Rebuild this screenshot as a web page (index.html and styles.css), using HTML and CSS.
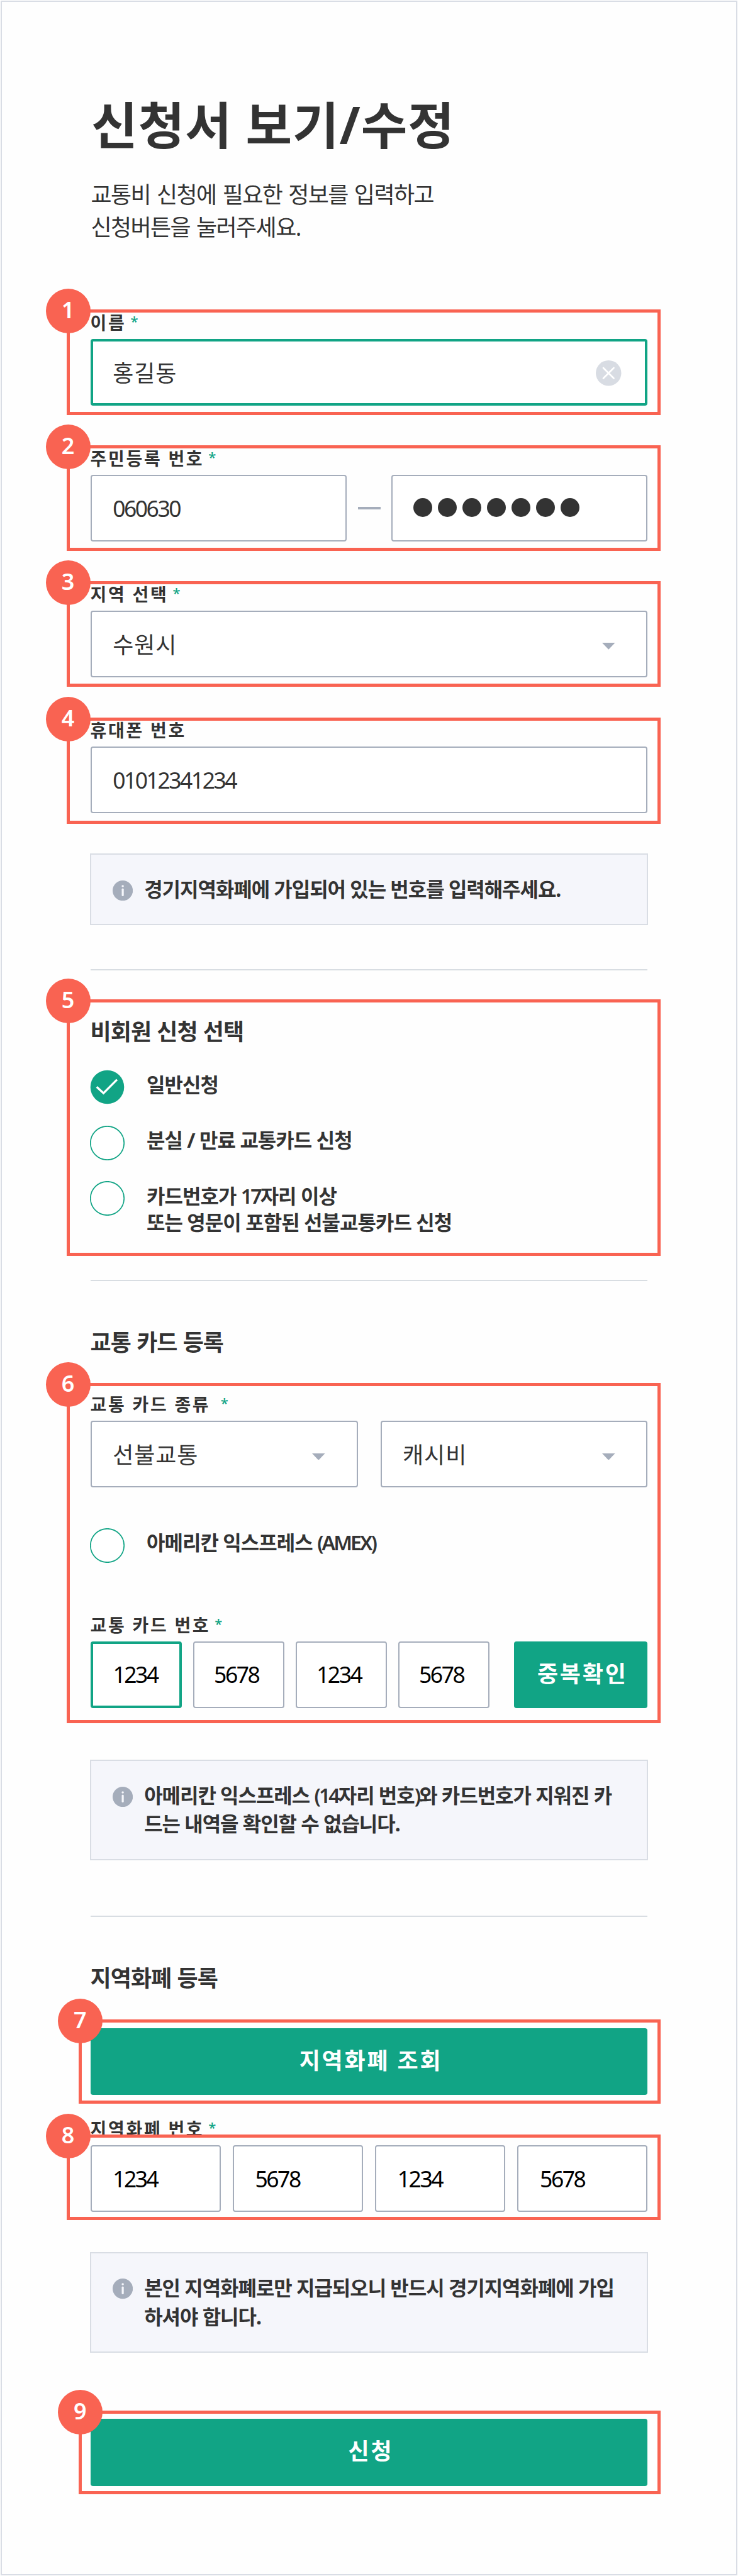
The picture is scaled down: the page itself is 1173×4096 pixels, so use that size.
FILE: index.html
```html
<!DOCTYPE html>
<html lang="ko">
<head>
<meta charset="utf-8">
<title>신청서 보기/수정</title>
<link rel="stylesheet" href="styles.css">
</head>
<body>
<main class="page">
  <h1 class="title">신청서 보기/수정</h1>
  <p class="lead">교통비 신청에 필요한 정보를 입력하고<br>신청버튼을 눌러주세요.</p>

  <div class="fields">
    <section class="group">
      <div class="label">이름<span class="req">*</span></div>
      <div class="input input--active">
        <span class="value">홍길동</span>
        <svg class="clear" viewBox="0 0 40 40"><circle cx="20" cy="20" r="20"/><path d="M11.8 11.8 28.2 28.2M28.2 11.8 11.8 28.2"/></svg>
      </div>
      <div class="mark"><span class="badge">1</span></div>
    </section>

    <section class="group">
      <div class="label">주민등록 번호<span class="req">*</span></div>
      <div class="row row--id">
        <div class="input"><span class="value value--num">060630</span></div>
        <span class="dash"></span>
        <div class="input"><span class="dots"><i></i><i></i><i></i><i></i><i></i><i></i><i></i></span></div>
      </div>
      <div class="mark"><span class="badge">2</span></div>
    </section>

    <section class="group">
      <div class="label">지역 선택<span class="req">*</span></div>
      <div class="input"><span class="value">수원시</span><svg class="arrow" viewBox="0 0 21 11"><path d="M0 0H21L10.5 11Z"/></svg></div>
      <div class="mark"><span class="badge">3</span></div>
    </section>

    <section class="group">
      <div class="label">휴대폰 번호</div>
      <div class="input"><span class="value value--num">01012341234</span></div>
      <div class="mark mark--phone"><span class="badge">4</span></div>
    </section>
  </div>

  <div class="info info--phone">
    <svg class="info-icon" viewBox="0 0 32 32"><circle cx="16" cy="16" r="16"/><circle class="ink" cx="16" cy="8.9" r="1.75"/><rect class="ink" x="14.4" y="12.5" width="3.2" height="12.4" rx="1.6"/></svg>
    <p>경기지역화폐에 가입되어 있는 번호를 입력해주세요.</p>
  </div>

  <hr class="rule rule--first">

  <section class="group group--types">
    <h2 class="heading">비회원 신청 선택</h2>
    <div class="radios">
      <div class="radio"><svg class="circle" viewBox="0 0 55 55"><circle class="on" cx="27.5" cy="27.5" r="26.8"/><path d="M10.7 27.2 21.5 37.2 43 15.6"/></svg><span>일반신청</span></div>
      <div class="radio"><svg class="circle" viewBox="0 0 55 55"><circle cx="27.5" cy="27.5" r="26.7"/></svg><span>분실 / 만료 교통카드 신청</span></div>
      <div class="radio"><svg class="circle" viewBox="0 0 55 55"><circle cx="27.5" cy="27.5" r="26.7"/></svg><span>카드번호가 <b class="tight">17</b>자리 이상<br>또는 영문이 포함된 선불교통카드 신청</span></div>
    </div>
    <div class="mark mark--types"><span class="badge">5</span></div>
  </section>

  <hr class="rule">

  <h2 class="heading heading--section">교통 카드 등록</h2>

  <section class="group group--card">
    <div class="label">교통 카드 종류<span class="req req--far">*</span></div>
    <div class="row row--kinds">
      <div class="input"><span class="value">선불교통</span><svg class="arrow" viewBox="0 0 21 11"><path d="M0 0H21L10.5 11Z"/></svg></div>
      <div class="input"><span class="value">캐시비</span><svg class="arrow" viewBox="0 0 21 11"><path d="M0 0H21L10.5 11Z"/></svg></div>
    </div>
    <div class="radio radio--amex"><svg class="circle" viewBox="0 0 55 55"><circle cx="27.5" cy="27.5" r="26.7"/></svg><span>아메리칸 익스프레스 <b class="tight">(AMEX)</b></span></div>
    <div class="label">교통 카드 번호<span class="req">*</span></div>
    <div class="row row--check">
      <div class="input input--digits input--active"><span class="value value--num">1234</span></div>
      <div class="input input--digits"><span class="value value--num">5678</span></div>
      <div class="input input--digits"><span class="value value--num">1234</span></div>
      <div class="input input--digits"><span class="value value--num">5678</span></div>
      <button class="button">중복확인</button>
    </div>
    <div class="mark mark--card"><span class="badge">6</span></div>
  </section>

  <div class="info info--card">
    <svg class="info-icon" viewBox="0 0 32 32"><circle cx="16" cy="16" r="16"/><circle class="ink" cx="16" cy="8.9" r="1.75"/><rect class="ink" x="14.4" y="12.5" width="3.2" height="12.4" rx="1.6"/></svg>
    <p>아메리칸 익스프레스 <b class="tight">(14</b>자리 번호<b class="tight">)</b>와 카드번호가 지워진 카<br>드는 내역을 확인할 수 없습니다.</p>
  </div>

  <hr class="rule rule--last">

  <h2 class="heading heading--section">지역화폐 등록</h2>

  <section class="group group--lookup">
    <button class="button">지역화폐 조회</button>
    <div class="mark mark--button"><span class="badge">7</span></div>
  </section>

  <section class="group group--local">
    <div class="label">지역화폐 번호<span class="req">*</span></div>
    <div class="row row--local">
      <div class="input input--plain"><span class="value value--num">1234</span></div>
      <div class="input input--plain"><span class="value value--num">5678</span></div>
      <div class="input input--plain"><span class="value value--num">1234</span></div>
      <div class="input input--plain"><span class="value value--num">5678</span></div>
    </div>
    <div class="mark mark--local"><span class="badge">8</span></div>
  </section>

  <div class="info info--local">
    <svg class="info-icon" viewBox="0 0 32 32"><circle cx="16" cy="16" r="16"/><circle class="ink" cx="16" cy="8.9" r="1.75"/><rect class="ink" x="14.4" y="12.5" width="3.2" height="12.4" rx="1.6"/></svg>
    <p>본인 지역화폐로만 지급되오니 반드시 경기지역화폐에 가입<br>하셔야 합니다.</p>
  </div>

  <section class="group group--submit">
    <button class="button">신청</button>
    <div class="mark mark--button"><span class="badge">9</span></div>
  </section>
</main>
</body>
</html>
```
FILE: styles.css
```css
* { box-sizing: border-box; }

body {
  margin: 0;
  padding: 1px;
  background: #fff;
  color: #333;
  font-family: "Noto Sans", "Noto Sans CJK KR", sans-serif;
  white-space: nowrap;
}

.page {
  height: 4094px;
  padding: 145px 140.6px 0;
  border: 2px solid #d9dde5;
  background: #fefefe;
}

h1, h2, p { margin: 0; }

.title {
  padding-left: 1.5px;
  font-size: 80px;
  line-height: 100px;
  font-weight: 700;
  letter-spacing: 0.95px;
}

.lead {
  height: 105.8px;
  margin-top: 35.5px;
  padding-left: 0.8px;
  font-size: 36px;
  line-height: 52.9px;
  letter-spacing: -1.6px;
  word-spacing: 2.3px;
}

.fields {
  display: flex;
  flex-direction: column;
  gap: 66.15px;
  margin-top: 105.9px;
}

.group { position: relative; }

.label {
  display: flex;
  height: 36px;
  margin-bottom: 7.6px;
  font-size: 28px;
  line-height: 36px;
  font-weight: 700;
  letter-spacing: 2.7px;
  white-space: pre;
}

.req {
  margin-left: 7px;
  color: #11a485;
  font-size: 22px;
  line-height: 30px;
  font-weight: 500;
}
.req--far { margin-left: 16.3px; }

.input {
  display: flex;
  align-items: center;
  height: 106.2px;
  padding: 0 39.9px 0 33.6px;
  border: 2px solid #a5adbb;
  border-radius: 4px;
  background: #fff;
}
.input--active {
  padding: 0 37.9px 0 31.6px;
  border: 4px solid #11a485;
}

.value { font-size: 36px; letter-spacing: 0.9px; }
.value--num { font-size: 35.5px; letter-spacing: -2.5px; }

.input--digits {
  padding: 0 0 2px 31.5px;
  color: #000;
}
.input--digits.input--active { padding-left: 31.8px; }
.input--plain { color: #000; }

.clear {
  width: 40.5px;
  height: 40.5px;
  margin: 3px 0 0 auto;
  fill: #d8dce3;
}
.clear path { stroke: #fff; stroke-width: 2.6; stroke-linecap: round; }

.arrow {
  width: 20.6px;
  height: 10.8px;
  margin: 8px 9.7px 0 auto;
  fill: #a5adbb;
}

.row { display: grid; }
.row--id { grid-template-columns: 407.5px 1fr 407.3px; }
.row--kinds { grid-template-columns: 1fr 1fr; gap: 36px; }
.row--check { grid-template-columns: repeat(4, 145.1px) 1fr; column-gap: 17.9px; }
.row--check .button { margin-left: 21px; width: 212.5px; }
.row--local { grid-template-columns: repeat(4, 1fr); gap: 19.4px; }

.dash {
  place-self: center;
  width: 36px;
  height: 3.6px;
  background: #a5adbb;
}

.dots { display: flex; gap: 8.5px; margin: -2px 0 0 -1.2px; }
.dots i {
  width: 30.5px;
  height: 30.5px;
  border-radius: 50%;
  background: #333;
}

.mark {
  position: absolute;
  inset: -3.4px -20.2px -15.2px -38.1px;
  border: 5px solid #f96352;
}
.mark--phone { top: -1.9px; bottom: -16.9px; }
.mark--types { top: -25.8px; bottom: -32px; }
.mark--card { top: -16.2px; bottom: -24px; }
.mark--button { top: -13.6px; bottom: -13.5px; left: -18.7px; }
.mark--local { top: 26.7px; bottom: -13.3px; }

.badge {
  position: absolute;
  top: -38px;
  left: -38px;
  width: 71px;
  height: 71px;
  border-radius: 50%;
  background: #f96352;
  color: #fff;
  font-size: 36px;
  line-height: 68.5px;
  font-weight: 600;
  text-align: center;
}

.info {
  display: flex;
  height: 160px;
  margin: 0 -0.7px;
  padding: 31.5px 0 0 33.9px;
  border: 2px solid #d9dde4;
  background: #f5f6fb;
  font-size: 32px;
  line-height: 45.5px;
  font-weight: 700;
  letter-spacing: -1.03px;
}
.info--phone { height: 113.9px; margin-top: 64.7px; }
.info--card { margin-top: 82.2px; }
.info--local { margin-top: 64.3px; line-height: 46.2px; }

.info-icon {
  width: 32.2px;
  height: 32.2px;
  margin: 8.7px 18.2px 0 0;
  fill: #a5adbb;
}
.info-icon .ink { fill: #f5f6fb; }

.tight { font-weight: 600; letter-spacing: -2.9px; }

.rule {
  height: 2px;
  margin: 69.9px 0 0;
  border: 0;
  background: #d8dde2;
}
.rule--first { margin-top: 69.5px; }
.rule--last { margin-top: 87.7px; }

.heading {
  height: 50px;
  font-size: 36px;
  line-height: 52.5px;
  font-weight: 700;
  letter-spacing: -0.95px;
  word-spacing: 0.8px;
}
.heading--section { margin-top: 72.2px; }

.group--types { margin-top: 72.3px; }

.radios {
  display: flex;
  flex-direction: column;
  gap: 33.4px;
  margin-top: 36.2px;
}

.radio {
  display: flex;
  gap: 35.2px;
  margin-left: -0.8px;
  font-size: 32px;
  line-height: 42.4px;
  font-weight: 700;
  letter-spacing: -0.95px;
}
.radio span { padding-top: 2.5px; }

.circle {
  flex: none;
  width: 55px;
  height: 55px;
  fill: #fff;
  stroke: #11a485;
  stroke-width: 1.7;
}
.circle .on { fill: #11a485; stroke: none; }
.circle path { fill: none; stroke: #fff; stroke-width: 3.4; }

.group--card { margin-top: 55.8px; }
.radio--amex { margin: 64.6px 0 81.6px -0.8px; }

.button {
  display: block;
  width: 100%;
  height: 106.3px;
  padding: 0 0 2px 6px;
  border: 0;
  border-radius: 4px;
  background: #11a485;
  color: #fff;
  font: 700 36px/50px "Noto Sans", "Noto Sans CJK KR", sans-serif;
  letter-spacing: 2.8px;
}

.group--lookup { margin-top: 54.8px; }
.group--local { margin-top: 35.8px; }
.group--submit { margin-top: 105.2px; }
```
